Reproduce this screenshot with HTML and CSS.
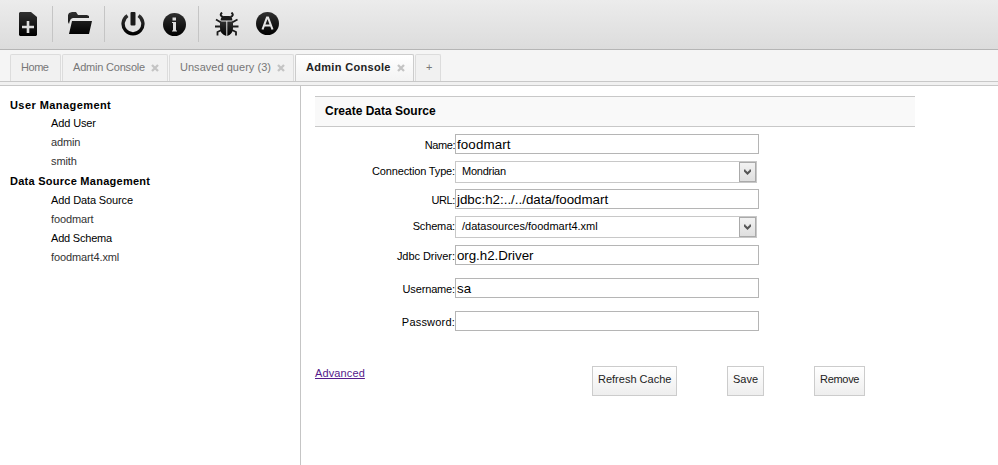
FILE: index.html
```html
<!DOCTYPE html>
<html lang="en">
<head>
<meta charset="utf-8">
<title>Admin Console</title>
<link rel="stylesheet" href="styles.css">
</head>
<body>
<header class="toolbar">
  <svg class="icon new" width="18" height="24" viewBox="0 0 18 24"><path fill="url(#ink)" d="M0 1l1-1h11l6 5v18l-1 1H1l-1-1z"/><path stroke="#ddd" stroke-width="2.6" d="M9 9v12M3 15h12"/></svg>
  <i class="divider first"></i>
  <svg class="icon open" width="24" height="23" viewBox="0 0 24 23"><path fill="url(#ink)" d="M0 10V3L1 1l3-1h4l2 3h9l2 1v2H5Q2 6 1 12zM4 9h20l-3 13H1z"/></svg>
  <i class="divider second"></i>
  <svg class="icon power" width="24" height="24" viewBox="0 0 24 24"><path fill="none" stroke="url(#ink)" stroke-width="3.4" d="M6.500 3.700a9.900 9.900 0 1 0 11 0"/><rect x="9.500" width="5" height="13.500" rx="1" fill="#1b1b1b"/></svg>
  <svg class="icon info" width="23" height="23" viewBox="0 0 23 23"><circle cx="11.500" cy="11.500" r="11.500" fill="url(#ink)"/><path fill="#ddd" d="M9.500 4.500h3.500v3H9.500zM9 9h4v8.500h1v1H9v-1h1v-7.500H9z"/></svg>
  <i class="divider third"></i>
  <svg class="icon bug" width="24" height="24" viewBox="0 0 24 24"><g fill="none" stroke="#1b1b1b"><path stroke-width="2" d="M7 .5q-3 3 1 4.500M16.500 .5q3 3-1 4.500"/><path stroke-width="1.800" d="M6 10.500 1 7.500M6 14.500H0M6.500 18 2.500 20v3.500M17 10.500 22.500 7.500M17 14.500h6.500M17 18l4 2v3.500"/></g><path fill="#1b1b1b" d="M5.500 8.500Q6 4 9 4h5q3 0 3.500 4.500z"/><path fill="url(#ink)" d="M5 9.500h6.300V24Q5 22 5 16zM12.300 9.500H18V16q0 6-5.700 8z"/></svg>
  <svg class="icon about" width="23" height="23" viewBox="0 0 23 23"><circle cx="11.500" cy="11.500" r="11.500" fill="url(#ink)"/><path fill="none" stroke="#e4e4e4" stroke-width="2.100" d="M6.500 17.500 11 5.500h1l4.500 12M8 13.500h7"/></svg>
</header>
<nav class="tabs">
  <div class="tab home"><span>Home</span></div>
  <div class="tab console"><span>Admin Console</span><svg class="close" width="8" height="8" viewBox="0 0 8 8"><path d="m1 1 6 6M7 1 1 7"/></svg></div>
  <div class="tab query"><span>Unsaved query (3)</span><svg class="close" width="8" height="8" viewBox="0 0 8 8"><path d="m1 1 6 6M7 1 1 7"/></svg></div>
  <div class="tab active"><span>Admin Console</span><svg class="close" width="8" height="8" viewBox="0 0 8 8"><path d="m1 1 6 6M7 1 1 7"/></svg></div>
  <div class="tab add"><span>+</span></div>
</nav>
<div class="strip"></div>
<main class="workspace">
  <aside class="sidebar">
    <h2 class="um"><span>User Management</span></h2>
    <ul>
      <li class="action"><span>Add User</span></li>
      <li><span>admin</span></li>
      <li><span>smith</span></li>
    </ul>
    <h2 class="dsm"><span>Data Source Management</span></h2>
    <ul>
      <li class="action"><span class="add-ds">Add Data Source</span></li>
      <li><span>foodmart</span></li>
      <li class="action"><span class="add-schema">Add Schema</span></li>
      <li><span class="file">foodmart4.xml</span></li>
    </ul>
  </aside>
  <section class="content">
    <h3><span>Create Data Source</span></h3>
    <form>
      <label class="row r-name"><span class="label">Name:</span><span class="field">foodmart</span></label>
      <label class="row r-type"><span class="label">Connection Type:</span><span class="select"><span>Mondrian</span><i class="arrow"><svg width="7" height="6" viewBox="0 0 7 6"><path d="M.5 .5v1L3.500 4.500 6.500 1.500v-1"/></svg></i></span></label>
      <label class="row r-url"><span class="label">URL:</span><span class="field">jdbc:h2:../../data/foodmart</span></label>
      <label class="row r-schema"><span class="label">Schema:</span><span class="select"><span>/datasources/foodmart4.xml</span><i class="arrow"><svg width="7" height="6" viewBox="0 0 7 6"><path d="M.5 .5v1L3.500 4.500 6.500 1.500v-1"/></svg></i></span></label>
      <label class="row r-driver"><span class="label">Jdbc Driver:</span><span class="field">org.h2.Driver</span></label>
      <label class="row r-user"><span class="label">Username:</span><span class="field">sa</span></label>
      <label class="row r-pass"><span class="label">Password:</span><span class="field"></span></label>
    </form>
    <div class="actions">
      <a><span>Advanced</span></a>
      <div class="button refresh"><span>Refresh Cache</span></div>
      <div class="button save"><span>Save</span></div>
      <div class="button remove"><span>Remove</span></div>
    </div>
  </section>
</main>
<svg class="defs" width="0" height="0"><defs><linearGradient id="ink" x1="0" y1="0" x2="0" y2="1"><stop offset="0" stop-color="#303030"/><stop offset="1" stop-color="#000"/></linearGradient></defs></svg>
</body>
</html>
```
FILE: styles.css
```css
* { box-sizing: border-box; }
body { margin: 0; height: 465px; overflow: hidden; background: #fff; color: #000; font: 11px/14px "Liberation Sans", Arial, sans-serif; white-space: nowrap; }
.defs { display: block; }
.toolbar { height: 50px; display: flex; align-items: flex-start; padding: 6px 0 0 19px; background: linear-gradient(#ececec, #dcdcdc); border-bottom: 1px solid #b5b5b5; }
.icon { display: block; flex: none; margin-top: 6px; }
.divider { width: 1px; height: 36px; background: #c5c5c5; flex: none; }
.first { margin: 0 15px; }
.second { margin: 0 16px 0 12px; }
.info { margin: 7px 12px 0 18px; }
.third { margin-right: 16px; }
.about { margin-left: 17px; }
.tabs { height: 31px; padding: 4px 0 0 10px; display: flex; gap: 1px; background: #f5f5f5; }
.tab { height: 27px; display: flex; align-items: flex-start; padding: 5px 0 0 10px; border: 1px solid #dcdcdc; border-bottom: 0; border-radius: 2px 2px 0 0; background: #f1f1f1; color: #777; }
.home { width: 51px; letter-spacing: -0.45px; }
.console { width: 106px; letter-spacing: -0.2px; }
.query { width: 125px; letter-spacing: 0.03px; }
.active { width: 119px; color: #222; font-weight: bold; background: linear-gradient(#fff, #f3f3f3); border-color: #ccc; letter-spacing: 0.31px; }
.add { width: 26px; }
.close { margin: 4px 0 0 6px; }
.close path { fill: none; stroke: #c4c4c4; stroke-width: 2.3; }
.strip { height: 5px; border-top: 1px solid #c8c8c8; border-bottom: 1px solid #c8c8c8; background: #f1f1f1; }
.workspace { display: flex; height: 379px; }
.sidebar { width: 301px; border-right: 1px solid #c5c5c5; padding: 10px 0 0 10px; }
h2 { margin: 0; height: 20px; font-size: 11px; line-height: 21px; }
.um { height: 18px; line-height: 19px; letter-spacing: 0.43px; }
.dsm { letter-spacing: 0.26px; }
ul { list-style: none; margin: 0; padding: 0 0 0 41px; }
li { height: 19px; line-height: 19px; color: #333; letter-spacing: -0.12px; }
.action { color: #000; }
.add-schema { letter-spacing: -0.2px; }
.content { padding: 10px 0 0 14px; }
h3 { margin: 0; width: 600px; height: 31px; padding: 7px 0 0 10px; border-top: 1px solid #c8c8c8; border-bottom: 1px solid #c8c8c8; background: #f9f9f9; font-size: 12px; line-height: 15px; }
form { padding-top: 7px; }
.row { display: flex; align-items: flex-start; }
.label { width: 140px; text-align: right; padding: 4px 0 0; letter-spacing: -0.15px; }
.r-type .label, .r-schema .label { padding-top: 3px; }
.r-name .label { letter-spacing: -0.45px; }
.r-url .label { letter-spacing: -0.4px; }
.r-driver .label { letter-spacing: -0.05px; }
.r-pass .label { letter-spacing: 0.2px; }
.field { width: 304px; height: 20px; border: 1px solid #b5b5b5; padding-left: 1px; font-size: 13.33px; line-height: 19px; }
.r-name .field { letter-spacing: 0.12px; }
.r-driver .field { letter-spacing: -0.05px; }
.select { width: 302px; height: 22px; border: 1px solid #c8c8c8; display: flex; justify-content: space-between; padding-left: 6px; line-height: 18px; }
.r-type .select { letter-spacing: -0.25px; }
.arrow { width: 17px; height: 20px; border: 1px solid #aaa; background: linear-gradient(#f2f2f2, #dfdfdf); padding: 6px 0 0 4px; }
.arrow svg { display: block; }
.arrow path { fill: none; stroke: #555; stroke-width: 2; }
.r-name, .r-schema { margin-bottom: 7px; }
.r-type { margin-bottom: 6px; }
.r-url { margin-bottom: 7px; }
.r-driver, .r-user { margin-bottom: 13px; }
.actions { margin-top: 35px; display: flex; align-items: flex-start; width: 550px; }
.actions a { color: #551a8b; text-decoration: underline; width: 277px; letter-spacing: 0.12px; }
.button { height: 30px; border: 1px solid #ccc; background: linear-gradient(#fff, #eee); color: #222; padding: 5px 0 0 5px; }
.refresh { width: 85px; margin-right: 50px; }
.save { width: 37px; margin-right: 50px; }
.remove { width: 51px; letter-spacing: -0.3px; }
```
